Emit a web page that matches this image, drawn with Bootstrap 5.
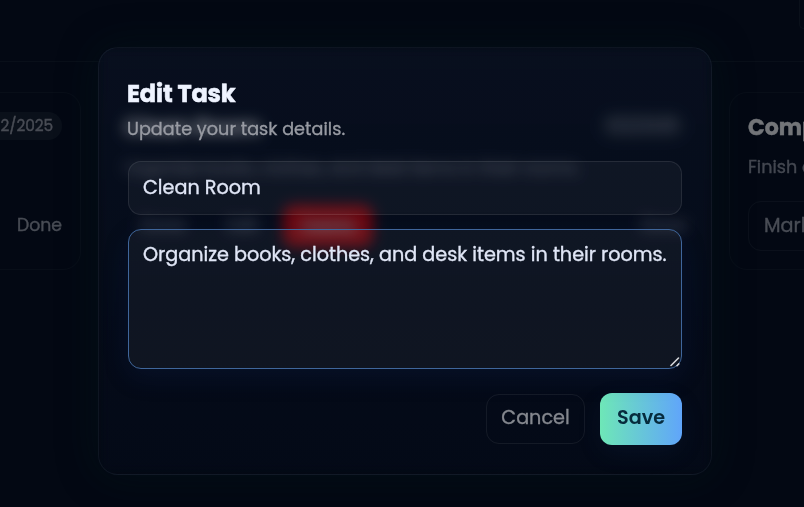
<!DOCTYPE html>
<html lang="en" data-bs-theme="dark">
<head>
<meta charset="utf-8">
<meta name="viewport" content="width=device-width, initial-scale=1">
<title>Edit Task</title>
<link href="https://cdn.jsdelivr.net/npm/bootstrap@5.3.0/dist/css/bootstrap.min.css" rel="stylesheet">
<style>
body{height:507px;font-family:Poppins,Inter,sans-serif;background:#070f1e;color:#e8eefc;font-size:17.28px;-webkit-text-stroke:.35px}
.topbar{height:62px;border-bottom:1px solid rgba(255,255,255,.06)}
.navbox{width:5px;height:29px;border:1px solid rgba(255,255,255,.07);border-width:0 0 1px 1px;border-bottom-left-radius:10px}
.board{gap:24px;padding:30px 0 0 6px}
.task{flex:0 0 600px;height:178px;padding:19px 18px;border:1px solid rgba(255,255,255,.05);border-radius:18px}
.task h2{font-size:22px;font-weight:700;line-height:32px;margin:0}
.task p{font-size:17.6px;line-height:27px;margin:10px 0 0;color:#9599a4;white-space:nowrap}
.task p.long{font-size:16.7px}
.pill{font-size:15.36px;line-height:28px;padding:0 9px;border-radius:14px;background:rgba(255,255,255,.07);color:#a0a4ae;letter-spacing:-.1px}
.acts{margin-top:20px;height:50px;color:#a0a4ae;gap:26px}
.ghost{border:1px solid rgba(255,255,255,.08);border-radius:13px;height:50px;padding:0 15px;line-height:48px;font-size:19.2px}
.danger{width:90px;height:42px;margin-left:-1px;border-radius:11px;background:#ff0000;color:#fff;line-height:42px}
.scrim{background:rgba(0,3,11,.55);padding:14px 0 0 6px}
.dialog{width:614px;height:428px;padding:28px 29px;border:1px solid rgba(150,180,190,.08);border-radius:20px;background:linear-gradient(rgba(13,19,31,.38),rgba(3,7,16,.5));backdrop-filter:blur(7px) brightness(1.6);box-shadow:0 0 40px rgba(3,26,27,.42)}
.dialog h1{font-size:24px;font-weight:700;line-height:36px;margin:0 0 0 -1px;letter-spacing:-.15px;color:#eef3ff;-webkit-text-stroke:.55px}
.hint{font-size:17.6px;line-height:27px;margin:4px 0 18px -1px;color:#989ba3;letter-spacing:.04px}
.dialog .field{font-size:19.2px;line-height:30px;color:#e0e6f6;padding:11px 14px;border:1px solid rgba(255,255,255,.09);border-radius:13px;background:rgba(255,255,255,.04)}
.field.name{height:54px;margin-bottom:14px}
.dialog .field.notes{height:140px;padding:10px 12px 10px 14px;border-color:#3f669b;background:linear-gradient(rgba(255,255,255,.04),rgba(255,250,225,.045));box-shadow:0 8px 26px rgba(22,47,110,.18);overflow:hidden;resize:none}
.grip{right:2px;bottom:2px;width:10px;height:10px}
.foot{gap:15px;margin-top:24px}
.dialog .cancel{width:99px;height:50px;border:1px solid rgba(255,255,255,.065);border-radius:13px;color:#85888f;font-size:19.2px;padding:0 0 1px}
.dialog .save{width:82px;height:52px;border:0;border-radius:12px;background:linear-gradient(90deg,#6ee7b7,#60a5fa);color:#062b3d;font-size:19.2px;font-weight:600;padding:0 0 1px;box-shadow:0 8px 24px rgba(30,65,120,.12);-webkit-text-stroke:0}
</style>
</head>
<body class="overflow-hidden position-relative">
<header class="topbar d-flex justify-content-end align-items-start"><div class="navbox"></div></header>
<main class="board d-flex justify-content-center">
  <article class="task">
    <div class="d-flex justify-content-between"><h2>Homework</h2><span class="pill align-self-start">11/2/2025</span></div>
    <p>Math exercises.</p>
    <div class="acts d-flex align-items-center justify-content-end"><span>Done</span></div>
  </article>
  <article class="task">
    <div class="d-flex justify-content-between"><h2>Clean Room</h2><span class="pill align-self-start">11/2/2025</span></div>
    <p class="long">Organize books, clothes, and desk items in their rooms.</p>
    <div class="acts d-flex align-items-center"><span class="ps-3">Done</span><span class="ps-3">Edit</span><span class="danger text-center">Delete</span><span class="ms-auto">Done</span></div>
  </article>
  <article class="task">
    <h2>Complete Report</h2>
    <p>Finish every section.</p>
    <div class="acts d-flex"><span class="ghost">Mark Done</span></div>
  </article>
</main>
<div class="scrim position-fixed top-0 start-0 w-100 h-100 d-flex align-items-center justify-content-center">
  <section class="dialog" role="dialog" aria-label="Edit Task">
    <h1>Edit Task</h1>
    <p class="hint">Update your task details.</p>
    <input class="field name form-control" value="Clean Room" aria-label="Title">
    <div class="position-relative">
      <textarea class="field notes form-control" aria-label="Description" spellcheck="false">Organize books, clothes, and desk items in their rooms.</textarea>
      <svg class="grip position-absolute" viewBox="0 0 10 10" fill="none" stroke="#d6d8dc" stroke-width="1.6" stroke-linecap="round"><path d="M1 8.5 8.5 1M7 8.7 8.8 6.9"/></svg>
    </div>
    <div class="foot d-flex justify-content-end align-items-center"><button class="cancel btn">Cancel</button><button class="save btn">Save</button></div>
  </section>
</div>
<script src="https://cdn.jsdelivr.net/npm/bootstrap@5.3.0/dist/js/bootstrap.bundle.min.js"></script>
</body>
</html>
